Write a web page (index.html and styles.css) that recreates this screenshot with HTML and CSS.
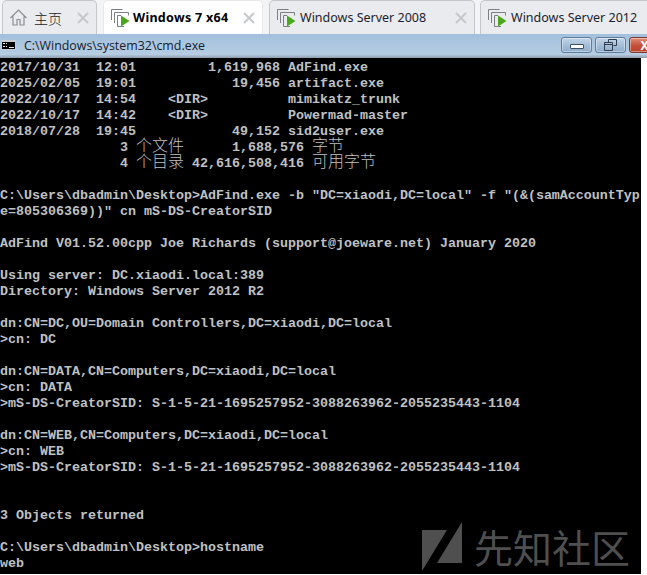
FILE: index.html
```html
<!DOCTYPE html>
<html lang="zh">
<head>
<meta charset="utf-8">
<title>cmd.exe</title>
<link rel="stylesheet" href="styles.css">
</head>
<body>
<div class="app">
  <nav class="tabs">
    <div class="tab tab-home">
      <svg class="home-icon" width="17" height="17" viewBox="0 0 17 17"><path d="M.5 9 8.500 1l8 8M3 7.500V16h4v-5.500h3V16h4V7.500" fill="none" stroke="#8b8f94" stroke-width="1.200"/></svg>
      <span class="tab-label">主页</span>
      <svg class="close-icon" width="12" height="12" viewBox="0 0 12 12"><path d="M1 1l10 10M11 1 1 11" stroke="#c6c8ca" stroke-width="2"/></svg>
    </div>
    <div class="tab tab-active">
      <svg class="vm-icon" width="19" height="18" viewBox="0 0 19 18"><path d="M.5 11V.5h11M3.5 14V3.5h14v3M6.5 17.5V6.500H10M6.500 17.500H13" fill="none" stroke="#7c8083"/><path d="M10 6.500 18.500 12 10 17.500z" fill="#4ba81c"/></svg>
      <span class="tab-label tab-bold">Windows 7 x64</span>
      <svg class="close-icon" width="12" height="12" viewBox="0 0 12 12"><path d="M1 1l10 10M11 1 1 11" stroke="#c6c8ca" stroke-width="2"/></svg>
    </div>
    <div class="tab tab-vm2">
      <svg class="vm-icon" width="19" height="18" viewBox="0 0 19 18"><path d="M.5 11V.5h11M3.500 14V3.500h14v3M6.500 17.500V6.500H10M6.500 17.500H13" fill="none" stroke="#7c8083"/><path d="M10 6.500 18.500 12 10 17.500z" fill="#4ba81c"/></svg>
      <span class="tab-label">Windows Server 2008</span>
      <svg class="close-icon" width="12" height="12" viewBox="0 0 12 12"><path d="M1 1l10 10M11 1 1 11" stroke="#c6c8ca" stroke-width="2"/></svg>
    </div>
    <div class="tab tab-vm3">
      <svg class="vm-icon" width="19" height="18" viewBox="0 0 19 18"><path d="M.5 11V.5h11M3.500 14V3.500h14v3M6.500 17.500V6.500H10M6.500 17.500H13" fill="none" stroke="#7c8083"/><path d="M10 6.500 18.500 12 10 17.500z" fill="#4ba81c"/></svg>
      <span class="tab-label">Windows Server 2012</span>
    </div>
  </nav>
  <header class="titlebar">
    <svg class="cmd-icon" width="15" height="10" viewBox="0 0 15 10"><rect width="15" height="10" fill="#c8ccd0"/><rect x="1" y="2" width="13" height="7" fill="#000"/><path d="M2 3h2v1H2zM2 6h2v1H2zM5 3h1v1H5zM5 6h1v1H5zM8 7h5v1H8z" fill="#e6e6e6"/></svg>
    <span class="title-text">C:\Windows\system32\cmd.exe</span>
    <div class="win-buttons">
      <div class="win-btn"><span class="min-glyph"></span></div>
      <div class="win-btn"><svg width="13" height="12" viewBox="0 0 13 12"><path d="M4.500 3V.500h8v6H9.500M.500 3.500h8v8h-8zM.500 5.500h8" fill="none" stroke="#2f3d4c"/></svg></div>
      <div class="win-btn win-close"><span class="close-glyph">X</span></div>
    </div>
  </header>
  <main class="console">
<div class="line">2017/10/31  12:01         1,619,968 AdFind.exe</div>
<div class="line">2025/02/05  19:01            19,456 artifact.exe</div>
<div class="line">2022/10/17  14:54    &lt;DIR&gt;          mimikatz_trunk</div>
<div class="line">2022/10/17  14:42    &lt;DIR&gt;          Powermad-master</div>
<div class="line">2018/07/28  19:45            49,152 sid2user.exe</div>
<div class="line">               3 <span class="cjk">个文件</span>      1,688,576 <span class="cjk">字节</span></div>
<div class="line">               4 <span class="cjk">个目录</span> 42,616,508,416 <span class="cjk">可用字节</span></div>
<div class="line"></div>
<div class="line">C:\Users\dbadmin\Desktop&gt;AdFind.exe -b "DC=xiaodi,DC=local" -f "(&amp;(samAccountTyp</div>
<div class="line">e=805306369))" cn mS-DS-CreatorSID</div>
<div class="line"></div>
<div class="line">AdFind V01.52.00cpp Joe Richards (support@joeware.net) January 2020</div>
<div class="line"></div>
<div class="line">Using server: DC.xiaodi.local:389</div>
<div class="line">Directory: Windows Server 2012 R2</div>
<div class="line"></div>
<div class="line">dn:CN=DC,OU=Domain Controllers,DC=xiaodi,DC=local</div>
<div class="line">&gt;cn: DC</div>
<div class="line"></div>
<div class="line">dn:CN=DATA,CN=Computers,DC=xiaodi,DC=local</div>
<div class="line">&gt;cn: DATA</div>
<div class="line">&gt;mS-DS-CreatorSID: S-1-5-21-1695257952-3088263962-2055235443-1104</div>
<div class="line"></div>
<div class="line">dn:CN=WEB,CN=Computers,DC=xiaodi,DC=local</div>
<div class="line">&gt;cn: WEB</div>
<div class="line">&gt;mS-DS-CreatorSID: S-1-5-21-1695257952-3088263962-2055235443-1104</div>
<div class="line"></div>
<div class="line"></div>
<div class="line">3 Objects returned</div>
<div class="line"></div>
<div class="line">C:\Users\dbadmin\Desktop&gt;hostname</div>
<div class="line">web</div>
    <div class="watermark">
      <svg width="40" height="49" viewBox="0 0 40 49"><path d="M0 8h25L0 49zM40 0v41H15z" fill="#4f4f4f"/></svg>
      <span class="wm-text">先知社区</span>
    </div>
  </main>
</div>
</body>
</html>
```
FILE: styles.css
```css
* { box-sizing: border-box; }
html, body { margin: 0; padding: 0; background: #fff; }
body { width: 647px; height: 575px; overflow: hidden; }
.app { display: flex; flex-direction: column; width: 647px; height: 575px; overflow: hidden; }

.tabs { display: flex; height: 34px; background: #f3f4f5; padding-left: 2px; gap: 6px; flex: none; overflow: hidden; }
.tab { display: flex; align-items: center; height: 34px; background: #e9ebee; border: 1px solid #c4c7ca; border-bottom: 0; border-radius: 5px 5px 0 0; flex: none; color: #1b2330; }
.tab-home { width: 95px; padding-left: 7px; }
.tab-active { width: 160px; padding-left: 7px; background: #fff; border-color: #e6e8ea; }
.tab-vm2 { width: 206px; padding-left: 7px; }
.tab-vm3 { width: 180px; padding-left: 7px; margin-left: -1px; }
.tab-label { font-family: "Noto Sans", "Noto Sans CJK SC", sans-serif; font-size: 12.5px; white-space: nowrap; margin-left: 4px; }
.tab-home .tab-label { font-size: 14px; font-weight: 300; margin-left: 7px; color: #222; }
.tab-bold { font-weight: 700; color: #000; letter-spacing: .3px; margin-left: 3px; }
.close-icon { margin-left: auto; margin-right: 7px; flex: none; }
.vm-icon, .home-icon { flex: none; }

.titlebar { display: flex; align-items: center; height: 24px; flex: none; background: linear-gradient(#a2bfdc, #b6cde2 85%, #8d9caa); padding: 0 0 2px 1px; }
.cmd-icon { flex: none; }
.title-text { font: 12.4px "Open Sans", sans-serif; color: #14202c; margin-left: 8px; white-space: nowrap; }
.win-buttons { display: flex; gap: 3px; margin-left: auto; margin-right: -13px; flex: none; }
.win-btn { width: 31px; height: 16px; display: flex; align-items: center; justify-content: center; border: 1px solid #5f7c9b; border-radius: 3px; background: linear-gradient(#c3d5e8, #a5bfd8 50%, #8facca); box-shadow: inset 0 0 0 1px rgba(255,255,255,.4); }
.min-glyph { width: 14px; height: 5px; border: 1px solid #3e4e5e; background: #fff; border-radius: 1px; margin-top: 3px; }
.win-close { background: linear-gradient(#e08f7a, #c44f38 55%, #b8412a); border-color: #7d3b30; overflow: hidden; }
.close-glyph { font: 700 12px "Noto Sans", sans-serif; color: #fff; }

.console { position: relative; width: 641px; height: 516px; flex: none; background: #000; padding-top: 2px; overflow: hidden; color: #c0c0c0; font: 700 13.333px/16px "Liberation Mono", monospace; }
.line { height: 16px; white-space: pre; }
.cjk { font: 300 16px/0 "Noto Sans CJK SC", sans-serif; }
.watermark { position: absolute; left: 422px; top: 464px; display: flex; align-items: center; gap: 12px; }
.wm-text { font: 400 39px/49px "Noto Sans CJK SC", sans-serif; color: #4f4f4f; white-space: nowrap; }
```
